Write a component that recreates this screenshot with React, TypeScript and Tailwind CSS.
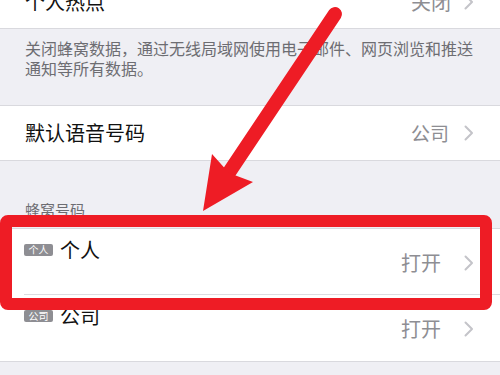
import React from "react";

const font = { fontFamily: '"Noto Sans CJK SC", "Noto Sans", sans-serif' };

function Chevron() {
  return (
    <svg width="10" height="16" viewBox="0 0 10 16" className="shrink-0">
      <polyline points="1.5,1.5 8,8 1.5,14.5" fill="none" stroke="#c4c4c9" strokeWidth="2" strokeLinecap="round" strokeLinejoin="round" />
    </svg>
  );
}

function Badge({ text }: { text: string }) {
  return (
    <span className="inline-flex h-[12px] w-[29px] items-center justify-center rounded-[2px] bg-[#8e8e93] text-[10px] leading-none text-white">
      {text}
    </span>
  );
}

function SimRow({ badge, title, value, border }: { badge: string; title: string; value: string; border: boolean }) {
  return (
    <div className="relative flex h-[66px] bg-white pl-[24px] pr-[26px]">
      <div className="flex h-[42px] items-center gap-[7px]">
        <Badge text={badge} />
        <span className="text-[20px] leading-[20px] text-[#111]">{title}</span>
      </div>
      <div className="ml-auto flex h-[68px] items-center">
        <span className="mr-[23px] text-[20px] leading-[20px] text-[#8e8e93]">{value}</span>
        <Chevron />
      </div>
      {border && <div className="absolute bottom-0 left-[24px] right-0 h-px bg-[#dcdce0]" />}
    </div>
  );
}

export default function App() {
  return (
    <div className="relative h-[375px] w-[500px] overflow-hidden bg-[#efeff4]" style={font}>
      {/* top row */}
      <div className="flex h-[29px] items-end border-b border-[#d9d9de] bg-white pb-[16px] pl-[25px] pr-[26px]">
        <span className="text-[20px] leading-[20px] text-[#111]">个人热点</span>
        <div className="ml-auto flex items-center">
          <span className="mr-[13px] text-[20px] leading-[20px] text-[#8e8e93]">关闭</span>
          <Chevron />
        </div>
      </div>
      {/* footer text */}
      <div className="h-[76px] pl-[25px] pt-[9px] text-[16px] leading-[20px] text-[#6d6d72]">
        关闭蜂窝数据，通过无线局域网使用电子邮件、网页浏览和推送
        <br />
        通知等所有数据。
      </div>
      {/* default voice */}
      <div className="flex h-[56px] items-center border-y border-[#d9d9de] bg-white pl-[25px] pr-[26px]">
        <span className="text-[20px] leading-[20px] text-[#111]">默认语音号码</span>
        <div className="ml-auto flex items-center">
          <span className="mr-[15px] text-[19px] leading-[20px] text-[#8e8e93]">公司</span>
          <Chevron />
        </div>
      </div>
      {/* section header */}
      <div className="flex h-[67px] items-end pb-[11px] pl-[25px] text-[15px] leading-[15px] text-[#6d6d72]">
        蜂窝号码
      </div>
      <div className="border-y border-[#d9d9de]">
        <SimRow badge="个人" title="个人" value="打开" border />
        <SimRow badge="公司" title="公司" value="打开" border={false} />
      </div>

      {/* annotation: red box */}
      <div className="absolute left-0 top-[215px] h-[95px] w-[492px] rounded-[8px] border-[12px] border-[#ee1c25]" />
      {/* annotation: arrow */}
      <svg className="absolute left-0 top-0" width="500" height="375" viewBox="0 0 500 375">
        <line x1="335" y1="14" x2="228" y2="174" stroke="#ee1c25" strokeWidth="14" strokeLinecap="round" />
        <polygon points="203,211 212,154 229,173 253,182" fill="#ee1c25" />
      </svg>
    </div>
  );
}
